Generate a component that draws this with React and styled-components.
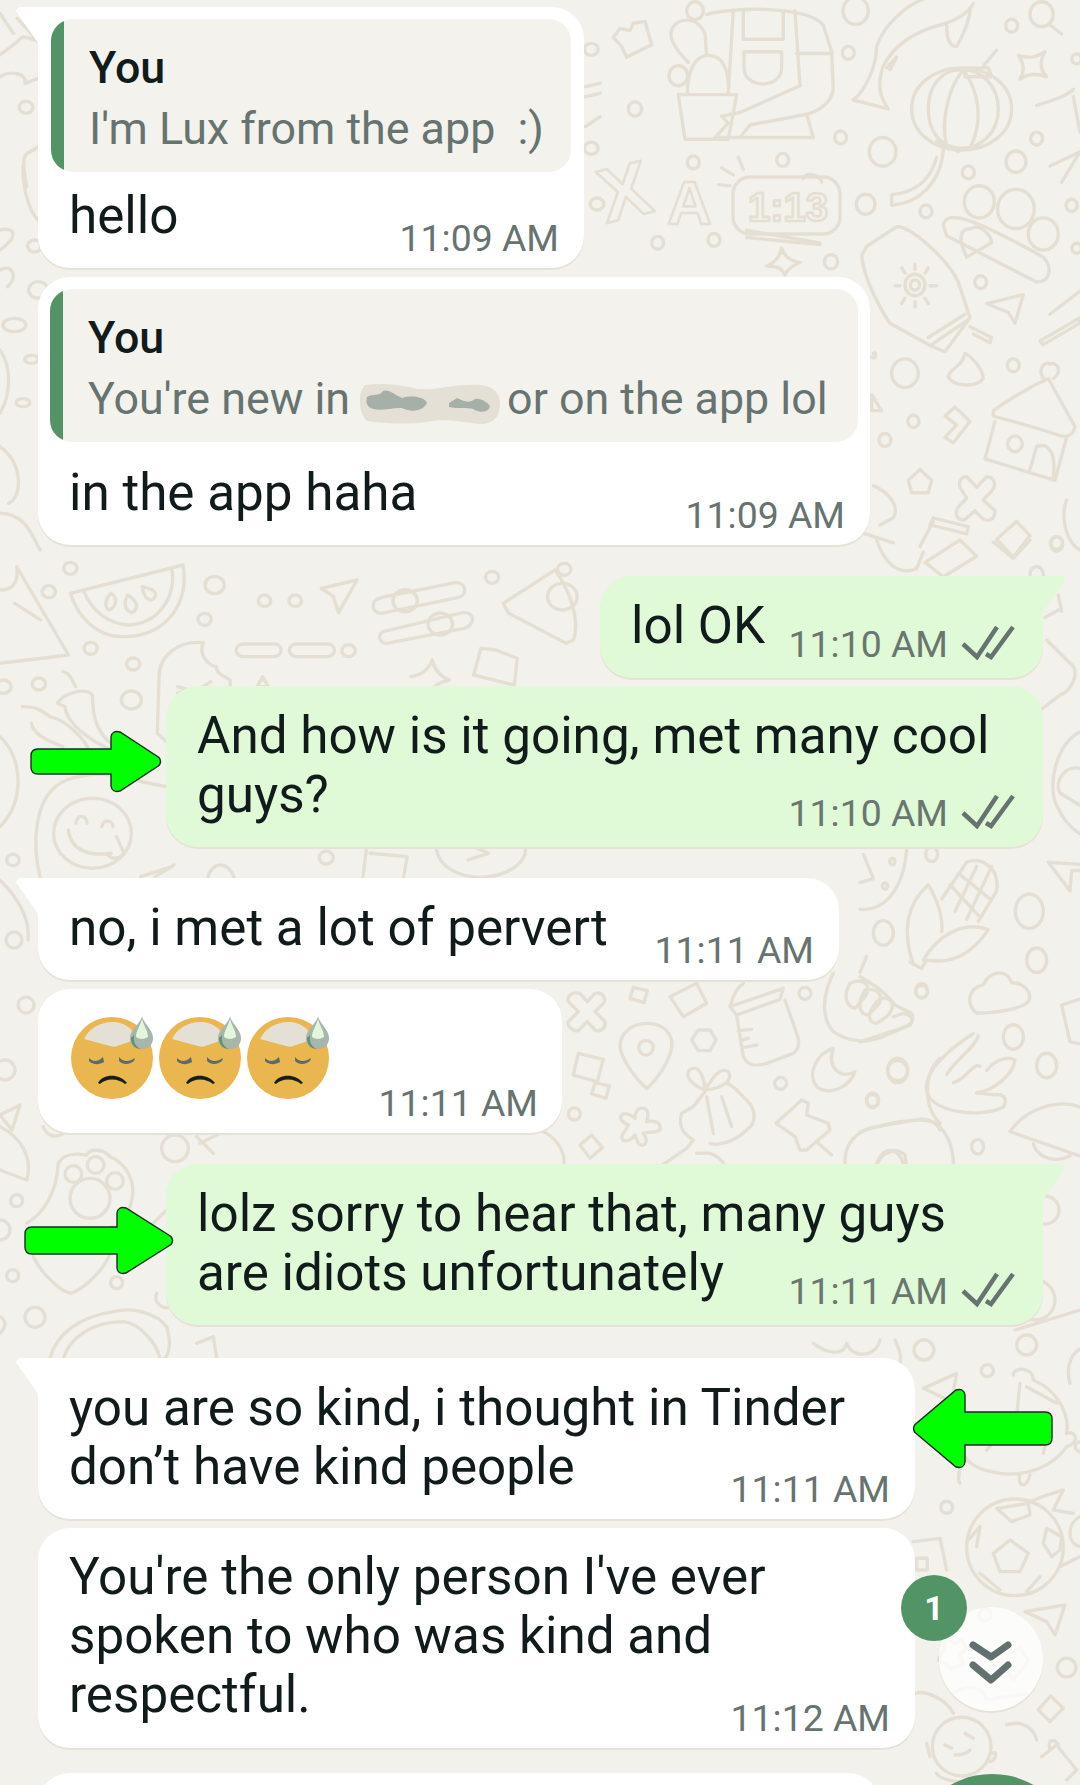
import React from 'react'
import styled, { createGlobalStyle } from 'styled-components'

const GlobalStyle = createGlobalStyle`
  html, body {
    margin: 0;
    padding: 0;
    background: #f3f1ec;
    font-family: Roboto, "Liberation Sans", sans-serif;
  }
`

const Screen = styled.div`
  position: relative;
  width: 1080px;
  height: 1785px;
  overflow: hidden;
  background: #f3f1ec;
`

const Wallpaper = styled.svg`
  position: absolute;
  left: 0;
  top: 0;
  fill: none;
  stroke: #e5dfd3;
  stroke-width: 3.4;
  stroke-linejoin: round;
  stroke-linecap: round;
  * {
    vector-effect: non-scaling-stroke;
  }
  text {
    font-family: "Liberation Sans", sans-serif;
    font-weight: 700;
    stroke-width: 2.6;
  }
`

const Chat = styled.div`
  position: relative;
  display: flex;
  flex-direction: column;
  padding: 7px 37px 0 38px;
`

const Bubble = styled.div`
  position: relative;
  box-sizing: border-box;
  width: ${(p) => p.$w}px;
  margin-top: ${(p) => p.$gap || 0}px;
  align-self: ${(p) => (p.$out ? 'flex-end' : 'flex-start')};
  flex-shrink: 0;
  padding: ${(p) => p.$pad || '20px 32px 23px 31px'};
  background: ${(p) => (p.$out ? '#e0f9d6' : '#ffffff')};
  border-radius: 32px;
  border-top-left-radius: ${(p) => (p.$tail && !p.$out ? '0' : '32px')};
  border-top-right-radius: ${(p) => (p.$tail && p.$out ? '0' : '32px')};
  box-shadow: 0 2px 0 #e7e2d8;

  ${(p) =>
    p.$tail &&
    `&::before {
      content: '';
      position: absolute;
      top: 0;
      ${p.$out ? 'right: -22px;' : 'left: -22px;'}
      width: 24px;
      height: 36px;
      background: ${p.$out ? '#e0f9d6' : '#ffffff'};
      border-top-${p.$out ? 'right' : 'left'}-radius: 5px;
      clip-path: polygon(${p.$out ? '0 0, 100% 0, 100% 12%, 8% 100%, 0 100%' : '0 0, 100% 0, 100% 100%, 92% 100%, 0 12%'});
    }`}
`

const Quote = styled.div`
  display: flex;
  height: 153px;
  background: #f3f2ed;
  border-radius: 22px;
  overflow: hidden;
`

const QuoteBar = styled.div`
  width: 13px;
  flex-shrink: 0;
  background: #539467;
`

const QuoteContent = styled.div`
  padding: 18px 0 0 25px;
  font-size: 44.8px;
  line-height: 61px;
  white-space: pre;
`

const QuoteAuthor = styled.div`
  font-weight: 500;
  color: #111b1b;
`

const QuoteText = styled.div`
  color: #667370;
`

const Smudge = styled.svg`
  display: inline-block;
  width: 143px;
  height: 42px;
  margin: 0 7px 0 7px;
  vertical-align: -11px;
`

const Body = styled.div`
  display: grid;
  padding: ${(p) => p.$pad || '0'};
  > * {
    grid-area: 1 / 1;
  }
`

const Message = styled.div`
  font-size: 51.2px;
  line-height: 59px;
  color: #111b1b;
  white-space: pre;
`

const Stamp = styled.div`
  display: flex;
  align-items: flex-start;
  gap: 12px;
  justify-self: end;
  align-self: end;
  height: 37px;
  margin-right: ${(p) => p.$right ?? -7}px;
  margin-bottom: ${(p) => p.$drop ?? -12}px;
  font-size: 37.4px;
  line-height: 37px;
  color: ${(p) => (p.$out ? '#6a7670' : '#667370')};
`

const Ticks = styled.svg`
  width: 56px;
  height: 36px;
  margin-top: -2px;
  fill: none;
  stroke: #667370;
  stroke-width: 4.5;
`

const EmojiRow = styled.div`
  display: flex;
  gap: 6px;
`

const EmojiFace = styled.svg`
  width: 82px;
  height: 82px;
  display: block;
  overflow: visible;
`

const ArrowIcon = styled.svg`
  position: absolute;
  left: ${(p) => p.$x}px;
  top: ${(p) => p.$y}px;
  transform: ${(p) => (p.$flip ? 'scaleX(-1)' : 'none')};
  overflow: visible;
`

const ScrollButton = styled.div`
  position: absolute;
  left: 939px;
  top: 1607px;
  width: 104px;
  height: 104px;
  border-radius: 50%;
  background: rgba(255, 255, 255, 0.76);
  box-shadow: 0 2px 0 #e7e2d8;
`

const Chevrons = styled.svg`
  display: block;
  fill: none;
  stroke: #627070;
  stroke-width: 7;
  stroke-linecap: round;
  stroke-linejoin: round;
`

const Badge = styled.div`
  position: absolute;
  left: 901px;
  top: 1575px;
  width: 66px;
  height: 66px;
  display: flex;
  align-items: center;
  justify-content: center;
  border-radius: 50%;
  background: #539467;
  color: #ffffff;
  font-size: 34px;
  font-weight: 700;
`

const Fab = styled.div`
  position: absolute;
  left: 908px;
  top: 1774px;
  width: 168px;
  height: 168px;
  border-radius: 50%;
  background: #539467;
`

// wallpaper doodles, noted in the coordinates of the crop they were read from
const doodles = [
  {
    t: 'translate(600 0) scale(.3333 .3571)',
    c: [[105, 305, 20], [745, 148, 18], [722, 385, 18], [848, 425, 40], [1235, 72, 18], [1310, 388, 18], [1248, 453, 30], [1105, 483, 18], [797, 572, 28], [978, 592, 18], [1415, 575, 17], [548, 448, 18], [280, 455, 18], [173, 680, 18], [342, 672, 18], [693, 733, 20], [1142, 790, 18], [915, 1045, 40], [1240, 1023, 18], [940, 1180, 17], [855, 1232, 18], [1370, 1520, 18], [767, 30, 38], [285, 30, 25], [235, 212, 28], [1138, 565, 45], [1248, 585, 55], [1330, 655, 45], [945, 798, 30], [945, 798, 14], [1245, 1243, 22], [1325, 40, 35], [1430, 165, 14], [1430, 695, 14]],
    p: [
      'M40 105 L60 80 L90 85 L100 65 L135 60 L155 125 L80 160 L65 130 Z',
      'M235 265 H410 L385 390 H255 Z',
      'M262 265 C262 190 290 155 325 155 C365 155 390 190 385 265',
      'M265 175 C230 140 205 110 215 85 C225 50 290 40 315 95 L320 155',
      'M320 40 C400 20 620 15 670 70 L695 145 L700 250 C695 285 660 310 620 320 L450 350 L420 385',
      'M600 240 L420 315 L365 325 L385 345 L345 385 H640 L620 320',
      'M400 30 L385 260 M585 30 L600 240 M430 30 V110 H550 V30 M590 150 H690',
      'M432 145 H545 V190 C545 250 432 250 432 190 Z',
      'M760 280 C800 250 830 180 830 130 C850 70 930 0 1000 -10 M860 190 L890 160 L870 195',
      'M760 280 L865 305 C840 270 830 240 850 185 C880 130 940 90 1020 70 C1060 60 1100 45 1120 10',
      'M1040 70 C1040 110 1050 130 1070 130 C1090 100 1110 50 1110 30',
      'M1085 190 C1170 190 1235 240 1235 305 C1235 370 1170 420 1085 420 C1000 420 935 370 935 305 C935 240 1000 190 1085 190 Z',
      'M1085 195 C1150 195 1195 245 1195 305 C1195 365 1150 415 1085 415 C1020 415 985 365 985 305 C985 245 1020 195 1085 195 Z',
      'M1090 195 C1050 240 1020 330 1040 410 M1090 195 C1140 260 1150 340 1110 415',
      'M1095 190 H1165 L1175 215 H1095 Z M1150 185 L1190 140',
      'M1010 395 L1075 425 M1010 440 C990 510 940 540 875 545 L875 575 C950 570 1020 520 1030 420',
      'M1255 155 C1290 165 1310 160 1335 145 C1320 170 1320 195 1340 215 C1310 205 1285 205 1260 222 C1275 200 1270 175 1255 155 Z',
      'M1350 70 L1385 95',
      'M1310 295 C1360 280 1400 270 1420 250 M1420 270 L1440 370 M1350 465 L1440 425 L1385 510',
      'M415 440 L430 475 M365 470 L400 490 M355 517 L390 520',
      'M440 645 L660 680 M440 665 L660 685 M610 500 C620 480 660 490 665 510',
      'M545 695 C555 720 570 730 600 735 C575 745 560 755 555 770 C545 750 530 745 500 745 C525 735 540 720 545 695 Z',
      'M800 690 L890 635 C925 630 1040 720 1075 790 L1110 890 L1035 985 L985 965 L870 905 C830 850 790 770 785 715 Z',
      'M985 945 L1095 880 M995 965 L1105 895 M1110 915 L1175 945 L1170 960 L1120 935',
      'M945 740 V755 M945 845 V860 M885 800 H900 M990 800 H1010 M905 750 L915 765 M985 750 L975 765 M905 850 L915 835 M985 850 L975 835',
      'M1115 640 C1140 625 1175 660 1175 680 L1100 720 C1080 680 1070 640 1115 640 Z',
      'M1030 630 C1040 590 1100 600 1330 720 C1360 750 1350 790 1310 790 L1040 660 Z',
      'M1160 850 L1270 825 L1245 905 L1225 875 Z',
      'M1095 990 C1120 1000 1150 1040 1150 1060 C1130 1085 1060 1085 1045 1055 C1050 1030 1085 1030 1095 990 Z',
      'M1180 1165 L1180 1150 C1240 1110 1310 1075 1345 1060 L1425 1195 C1420 1220 1400 1225 1380 1220 C1320 1200 1240 1180 1180 1165 Z',
      'M1185 1180 L1155 1285 L1365 1345 L1400 1225 M1290 1315 L1310 1250 C1340 1240 1370 1260 1360 1335 M1330 1060 C1310 1030 1340 1010 1350 1020 C1370 1010 1390 1040 1360 1060',
      'M925 1345 L960 1315 L995 1345 L985 1380 H935 Z',
      'M1100 1335 L1130 1365 L1160 1335 C1185 1335 1190 1360 1175 1375 L1150 1400 L1185 1430 C1185 1455 1165 1465 1145 1450 L1125 1430 L1095 1455 C1075 1460 1060 1440 1075 1420 L1100 1395 L1080 1365 C1075 1345 1085 1335 1100 1335 Z',
      'M1035 1165 L1065 1140 L1110 1180 L1060 1240 L1035 1225 L1070 1190 Z',
      'M1350 880 L1440 815 M1320 955 L1440 890 L1440 905 L1330 965 Z',
      'M1400 1400 C1380 1450 1400 1520 1440 1540',
      'M820 990 C830 980 830 1010 815 1000 M815 1105 L845 1150 L815 1150 Z',
      'M780 1490 L880 1520 M1000 1450 L1105 1475 L1100 1495 L990 1470 Z M960 1530 L1000 1460 M1190 1510 L1250 1460 L1290 1500 L1240 1560 Z',
      'M820 1360 C870 1380 900 1420 880 1450 L840 1470'
    ]
  },
  {
    t: 'translate(0 560) scale(.37 .3333)',
    c: [[190, 25, 18], [132, 95, 18], [580, 75, 26], [715, 122, 17], [798, 122, 17], [553, 178, 18], [245, 265, 18], [360, 312, 18], [942, 272, 18], [1330, 52, 18], [105, 372, 18], [355, 420, 27], [10, 380, 20], [1095, 122, 33], [1190, 192, 33], [1520, 110, 40], [1525, 28, 18], [250, 820, 105], [35, 900, 17], [882, 893, 19]],
    p: [
      'M190 100 L495 15 C510 120 460 230 330 230 C260 230 210 170 190 100 Z',
      'M225 90 C250 160 300 195 350 195 C430 190 475 110 465 30',
      'M300 100 C285 115 280 140 295 150 C315 140 320 115 300 100 Z M345 105 C335 125 335 150 355 158 C375 150 375 125 345 105 Z M385 80 C385 100 395 120 410 120 C425 110 430 90 385 80 Z',
      'M868 85 L965 60 L915 158 L900 108 Z',
      'M1010 130 C1010 115 1040 110 1065 105 L1230 68 C1260 65 1265 105 1240 112 L1040 158 C1015 165 1005 145 1010 130 Z',
      'M1035 215 L1250 158 C1285 155 1285 195 1255 205 L1045 250 C1025 250 1020 225 1035 215 Z',
      'M657 252 H741 A19 19 0 0 1 741 290 H657 A19 19 0 0 1 657 252 Z M801 252 H885 A19 19 0 0 1 885 290 H801 A19 19 0 0 1 801 252 Z',
      'M1360 130 L1500 30 C1540 90 1568 180 1550 240 L1530 250 L1375 160 Z',
      'M550 248 C480 240 430 290 430 350 L425 520 L450 545 M550 248 C535 280 560 315 585 320 C585 345 610 350 622 360 L622 380',
      'M1300 265 L1340 270 L1398 295 L1390 375 L1280 345 Z',
      'M1168 300 C1175 330 1190 350 1215 360 C1190 365 1180 375 1170 385 M1110 350 C1140 345 1160 325 1168 300',
      'M0 90 C40 90 50 60 45 20 L185 285 L0 310 M40 130 L110 180',
      'M155 430 C170 400 230 380 250 405 C250 470 260 520 310 560 L300 570 C240 540 180 490 175 440 Z M170 335 C195 340 195 370 205 380',
      'M60 440 C100 440 110 450 135 470 C180 480 230 540 240 570 M85 490 C90 520 120 540 170 560',
      'M205 790 C210 760 235 765 235 790 M275 800 C280 775 305 780 305 800 M185 810 C190 870 240 890 300 880 M290 880 C300 900 320 900 335 880 L315 830',
      'M110 960 C85 850 90 700 180 660 C280 620 340 660 450 680',
      'M0 530 C60 590 70 720 0 800',
      'M380 950 L465 920 M420 950 L470 915 M560 960 C570 900 620 900 635 960 M990 870 L980 960 M1000 880 L1100 890 L1090 960 M1180 870 C1190 930 1260 960 1320 950 C1390 940 1420 900 1420 870 M1265 900 L1320 880 L1280 860',
      'M480 380 L510 390 L480 400 M550 380 L570 365 M710 350 L725 380 H695 Z'
    ]
  },
  {
    t: 'translate(540 960)  scale(.3333)',
    c: [[795, 100, 18], [1145, 95, 18], [722, 370, 18], [103, 462, 18], [1073, 332, 30], [997, 422, 18], [318, 263, 22]],
    p: [
      'M120 100 L142 125 L165 100 C190 95 200 120 190 130 L165 155 L195 185 C200 210 175 215 165 210 L142 185 L115 212 C90 215 80 190 85 185 L115 155 L85 125 C80 105 100 95 120 100 Z',
      'M280 82 L322 92 L312 128 L270 115 Z M390 110 L470 70 L500 130 L430 170 Z',
      'M320 190 C380 190 400 230 395 265 C385 310 350 360 320 385 C290 360 245 300 240 260 C240 220 275 190 320 190 Z',
      'M475 210 H510 L528 240 L510 272 H475 L455 240 Z',
      'M570 140 L730 85 L720 118 L590 165 Z M590 165 L610 290 C625 320 650 320 680 310 L760 280 C780 265 780 245 770 220 L735 120 M610 70 C595 80 580 100 570 140 M595 212 L635 208 M605 240 L625 235 M612 262 L650 255',
      'M880 40 C850 100 840 170 880 215 C930 250 990 250 1040 225 L1110 195 C1125 180 1115 165 1090 160 L1060 170',
      'M930 70 C970 50 1000 80 975 110 L945 145 C925 140 905 115 930 70 Z M975 90 C1010 80 1040 110 1010 140 L985 165 C965 165 945 140 975 90 Z M1020 115 C1060 110 1070 140 1040 170 L1010 190 C990 190 970 165 1020 115 Z',
      'M115 280 L190 298 L172 365 L100 345 Z M165 368 L208 378 L198 415 L155 402 Z',
      'M880 265 C830 280 800 340 830 380 C870 410 930 380 945 335 C900 360 860 320 880 265 Z',
      'M785 420 L805 430 L800 465 L865 490 L870 510 L800 570 L780 570 L765 530 L730 505 L708 490 Z M830 545 L875 585',
      'M300 445 C330 440 325 470 320 485 C350 480 365 490 360 510 C340 520 320 515 310 520 C330 550 310 565 295 550 L285 525 C270 545 245 550 245 530 C250 515 265 500 265 495 C250 490 235 475 245 465 C260 455 280 470 285 475 C285 460 290 450 300 445 Z',
      'M495 390 C440 370 430 330 460 325 C480 320 495 360 495 390 C520 350 540 320 565 335 C580 360 550 385 495 390 Z',
      'M495 395 L460 440 L425 460 C415 490 425 520 460 540 L440 565 L360 620 M560 370 C590 380 605 410 620 420 C650 450 650 490 620 510 C590 540 540 560 510 550 M545 410 L575 500 M500 410 L520 520 M470 580 H510 C540 590 550 605 555 620',
      'M155 525 L187 563 L150 595 L120 555 Z',
      'M915 620 C910 550 950 510 1010 500 L1140 478 C1170 475 1195 495 1200 510 M1010 620 C1020 575 1070 560 1095 585 L1100 620',
      'M0 510 C50 530 80 580 70 620 M1200 295 C1150 340 1150 440 1200 490'
    ]
  },
  {
    t: 'translate(860 540) scale(.3333 .408)',
    c: [[70, 963, 30], [508, 910, 42], [530, 1030, 30], [185, 1105, 18], [460, 1218, 30], [113, 1300, 30], [560, 1288, 30], [38, 1373, 18], [353, 1487, 18], [215, 770, 18], [590, 10, 18], [530, 85, 20], [75, 848, 8], [97, 788, 8]],
    p: [
      'M160 1040 C130 970 130 900 205 845 C230 880 250 920 245 960 M150 1035 L185 1050 L200 1030',
      'M205 1030 C280 1040 340 1010 385 955 C320 935 240 960 190 1030',
      'M245 880 L320 790 C360 775 420 800 410 860 L355 935 M270 845 L355 920 M300 820 L390 880 M285 910 L350 800 M320 930 L395 800',
      'M565 790 L660 795 M565 790 L630 860 L635 810 L660 810',
      'M350 1160 C320 1140 320 1100 370 1090 C390 1055 440 1050 455 1085 C490 1085 520 1110 505 1130 C490 1150 400 1160 350 1160 Z',
      'M340 1210 C280 1240 190 1300 200 1350 C210 1400 350 1420 430 1390 C445 1370 430 1355 400 1360 L350 1355',
      'M260 1310 C300 1260 340 1250 355 1215 M280 1330 C320 1320 340 1280 360 1290 M380 1300 C410 1270 450 1265 465 1275 C460 1310 400 1350 350 1355',
      'M0 1070 C40 1090 80 1110 105 1140 L155 1160 C165 1180 150 1190 130 1195 L0 1230 M20 1020 L0 1060',
      'M450 1450 C500 1390 600 1370 660 1390 M450 1450 L660 1510 M520 1480 C530 1510 580 1530 630 1510',
      'M605 1140 L660 1125 M605 1140 L630 1230 L660 1235',
      'M0 1450 C80 1430 180 1410 230 1430 C270 1460 280 1500 280 1530 M50 1530 C70 1480 120 1490 130 1530',
      'M660 470 C590 500 560 600 590 650 C610 690 640 710 660 720 M660 560 C620 550 580 590 600 620 L660 650',
      'M50 0 C70 50 110 90 170 70 L190 30 M195 55 L300 0 L350 40 L250 90 Z M400 5 L460 45 L510 0',
      'M600 170 L555 190 M595 135 L605 175 M560 245 L640 310 C655 330 635 370 600 380 L520 430',
      'M140 760 C130 850 80 910 0 905 M10 770 L40 830 L0 840'
    ]
  },
  {
    t: 'translate(780 1340) scale(.3333)',
    c: [[432, 30, 30], [740, 15, 30], [622, 92, 18], [500, 502, 18], [860, 983, 28], [615, 825, 18], [705, 622, 145], [545, 1220, 88], [900, 320, 14]],
    p: [
      'M430 145 L530 100 L515 185 Z',
      'M700 105 C700 80 760 80 760 120 C830 150 870 220 860 280 C890 270 900 310 860 320 C820 380 740 410 660 400 C590 390 560 370 550 340 C540 380 530 420 540 430',
      'M720 130 L710 230 L620 330 M710 230 L810 260 L790 340 M720 400 C710 440 740 450 750 405 M740 140 L830 190',
      'M690 600 L745 640 L720 695 L660 695 L640 640 Z',
      'M650 505 L745 490 L750 525 L695 545 Z M800 565 L845 590 L840 630 L815 650 L790 610 Z M565 600 L600 560 L590 620 M600 700 L660 750 M780 710 L740 755',
      'M740 490 C780 470 820 460 850 450 L820 510 L880 520 M900 530 C860 550 860 610 900 620 M840 680 L900 650',
      'M400 605 L480 595 L500 690 M410 655 H442 V690 H410 Z',
      'M735 815 L855 795 L825 885 L800 845 Z',
      'M775 1110 L812 1068 L850 1105 L810 1145 Z',
      'M495 1215 L515 1225 M555 1180 L580 1195 M525 1245 C545 1245 560 1240 570 1230 M450 1250 L440 1210 M640 1240 C650 1230 650 1260 630 1265 M470 1300 C480 1330 600 1330 650 1335',
      'M405 1060 C440 1050 500 1080 520 1120 M680 1155 C720 1140 760 1160 770 1200',
      'M785 1250 L830 1215 L890 1290 L860 1320 M810 1225 C800 1205 820 1190 835 1215',
      'M870 130 C850 60 900 20 900 30 M345 0 C360 30 370 60 355 80 M100 10 C140 40 190 50 200 10 M200 10 C220 60 290 50 300 0',
      'M500 895 L525 910 L545 900 L560 925 L540 945 L550 975 L515 985 L475 960 L490 930 Z',
      'M690 940 L720 925 L745 960 L725 990 L700 1020 L680 990 Z',
      'M520 1060 C560 1030 610 1040 620 1080 C660 1070 700 1070 740 1060'
    ]
  },
  {
    t: 'translate(0 1120) scale(.3333)',
    c: [[270, 235, 60], [220, 162, 25], [287, 135, 25], [345, 183, 25], [50, 242, 18], [0, 330, 30], [38, 467, 18], [350, 488, 18], [105, 592, 30], [525, 85, 40]],
    p: [
      'M175 130 C190 100 230 100 260 105 C270 85 310 85 330 110 C380 130 410 190 395 240 C385 290 360 330 335 320',
      'M80 310 C130 280 170 220 175 130 M100 410 C130 470 190 520 215 520 C260 500 310 450 330 403',
      'M0 20 C60 50 100 110 80 180 L0 150',
      'M150 715 C170 640 240 590 340 575 C400 560 470 580 500 620 C515 670 510 700 490 720 M190 715 C210 650 280 605 370 605 C420 610 470 670 480 715',
      'M590 50 L640 100 M660 40 L600 70 M130 20 C140 50 170 55 190 40 M470 520 C460 550 490 570 510 560',
      'M0 590 C20 600 20 620 0 640 M590 670 L640 650 L650 715 M450 320 L500 270'
    ]
  },
  {
    t: 'scale(.3827 .3333)',
    c: [[68, 322, 18], [90, 738, 18], [100, 870, 25], [1545, 148, 18], [1545, 445, 18], [1560, 612, 18]],
    p: [
      'M0 40 L35 100 M45 55 L100 125 M0 165 L40 130 L60 110 L95 120',
      'M0 230 C30 210 70 220 65 250 L100 235',
      'M70 560 C50 440 70 470 100 440 M60 500 C60 580 80 640 100 660',
      'M0 690 C40 680 50 710 0 750 M0 810 C30 790 50 830 20 860 M1530 260 L1568 250 M1530 290 L1568 280 M1530 380 L1568 350'
    ]
  },
  {
    t: 'translate(0 280) scale(.574 .3333)',
    c: [[25, 135, 20], [55, 238, 12], [40, 368, 12]],
    p: ['M0 210 C20 260 20 340 0 400 M0 500 C40 550 40 650 15 670 M0 700 C50 700 60 790 70 810']
  },
  {
    t: 'translate(0 880)',
    c: [[14, 60, 8], [26, 125, 8], [5, 190, 10]],
    p: ['M0 0 C20 20 30 40 28 60 M0 235 L20 225 L12 250 Z']
  },
  {
    t: 'translate(925 1180)',
    c: [[120, 30, 14], [60, 80, 8], [110, 120, 20]],
    p: ['M40 0 L70 30 L30 60 M90 150 L155 130 M0 110 L40 100 L60 140']
  }
]

const Doodles = () => (
  <Wallpaper width='1080' height='1785' viewBox='0 0 1080 1785'>
    {doodles.map((group, i) => (
      <g key={i} transform={group.t}>
        {group.c.map(([cx, cy, r], j) => (
          <circle key={j} cx={cx} cy={cy} r={r} />
        ))}
        {group.p.map((d, j) => (
          <path key={j} d={d} />
        ))}
      </g>
    ))}
    <rect x='733' y='177' width='107' height='57' rx='17' />
    <text x='748' y='221' fontSize='40'>1:13</text>
    <text x='667' y='224' fontSize='62'>A</text>
    <text x='600' y='218' fontSize='76' transform='rotate(-14 625 195)'>X</text>
  </Wallpaper>
)

const SeenTicks = () => (
  <Ticks viewBox='0 0 56 36'>
    <path d='M3 20 L17 33 L37 3' />
    <path d='M26 30 L31 33 L53 3' />
  </Ticks>
)

const Time = ({ children, out, drop, right }) => (
  <Stamp $out={out} $drop={drop} $right={right}>
    {children}
    {out && <SeenTicks />}
  </Stamp>
)

const SweatFace = () => (
  <EmojiFace viewBox='0 0 82 82'>
    <circle cx='41' cy='41' r='41' fill='#e9b64f' />
    <path d='M13 22 C18 11 30 4 44 5 C52 6 58 9 63 16 L61 24 L43 30 Z' fill='#e5e0d6' />
    <path d='M18 41 C22 45 27 45 32 40 L33 45 C28 48 22 48 18 44 Z M48 40 C52 45 58 45 64 41 L63 44 C58 48 52 48 48 44 Z' fill='#5c6a6c' />
    <path d='M27 66 C32 57 48 56 56 66 L54 67 C47 61 35 61 29 67 Z' fill='#14201f' />
    <path d='M71 0 C74 8 82 13 82 21 C82 28 77 32 71 32 C64 32 59 28 59 21 C59 13 68 8 71 0 Z' fill='#a7b5ac' />
    <path d='M60 21 C60 28 64 32 70 32 C65 30 62 26 63 18 Z' fill='#5f9470' />
    <path d='M71 2 C73 9 77 14 77 20 C72 23 68 22 65 20 C65 14 69 9 71 2 Z' fill='#e3f7dc' />
  </EmojiFace>
)

const BlurredName = () => (
  <Smudge viewBox='0 0 143 42'>
    <path d='M8 2 C30 -1 50 3 60 6 C80 8 95 0 125 2 C138 4 143 12 143 20 C143 30 140 40 125 41 C100 39 90 35 70 39 C50 42 20 40 10 38 C2 32 0 10 8 2 Z' fill='#e5e0d5' />
    <path d='M10 14 C16 10 22 14 26 8 C32 6 38 12 45 15 C55 12 68 14 70 20 C66 28 55 30 45 25 C35 24 20 30 12 24 C9 21 9 17 10 14 Z' fill='#a6b0a8' />
    <path d='M92 20 L100 15 C106 18 112 21 118 16 C124 15 132 20 133 24 C130 30 122 30 116 26 C110 24 100 26 92 24 Z' fill='#a6b0a8' />
  </Smudge>
)

const arrowPath = (w, h, neck) => {
  const a = Math.round(h * 0.3)
  const b = Math.round(h * 0.7)
  return `M7 ${a} H${neck} V7 Q${neck + 1} 0 ${neck + 9} 2 L${w - 2} ${h / 2 - 4} Q${w + 1} ${h / 2} ${w - 2} ${h / 2 + 4} L${neck + 9} ${h - 2} Q${neck + 1} ${h} ${neck} ${h - 7} V${b} H7 Q0 ${b} 0 ${b - 7} V${a + 7} Q0 ${a} 7 ${a} Z`
}

const Arrow = ({ x, y, w, h, neck, flip }) => (
  <ArrowIcon $x={x} $y={y} $flip={flip} width={w} height={h} viewBox={`0 0 ${w} ${h}`}>
    <path d={arrowPath(w, h, neck)} fill='#00ff00' stroke='#1c2a22' strokeWidth='1.4' />
  </ArrowIcon>
)

const App = () => (
  <Screen>
    <GlobalStyle />
    <Doodles />
    <Chat>
      <Bubble $w={546} $tail $pad='12px 13px 23px'>
        <Quote>
          <QuoteBar />
          <QuoteContent>
            <QuoteAuthor>You</QuoteAuthor>
            <QuoteText>I'm Lux from the app  :)</QuoteText>
          </QuoteContent>
        </Quote>
        <Body $pad='14px 19px 0 18px'>
          <Message>hello</Message>
          <Time>11:09 AM</Time>
        </Body>
      </Bubble>

      <Bubble $w={832} $gap={9} $pad='12px 12px 23px'>
        <Quote>
          <QuoteBar />
          <QuoteContent>
            <QuoteAuthor>You</QuoteAuthor>
            <QuoteText>
              You're new in
              <BlurredName />
              or on the app lol
            </QuoteText>
          </QuoteContent>
        </Quote>
        <Body $pad='21px 20px 0 19px'>
          <Message>in the app haha</Message>
          <Time>11:09 AM</Time>
        </Body>
      </Bubble>

      <Bubble $w={443} $gap={31} $out $tail>
        <Body>
          <Message>lol OK</Message>
          <Time out drop={-8} right={-5}>11:10 AM</Time>
        </Body>
      </Bubble>

      <Bubble $w={877} $gap={8} $out>
        <Body>
          <Message>{'And how is it going, met many cool\nguys?'}</Message>
          <Time out drop={-8} right={-5}>11:10 AM</Time>
        </Body>
      </Bubble>

      <Bubble $w={801} $gap={31} $tail>
        <Body>
          <Message>no, i met a lot of pervert</Message>
          <Time>11:11 AM</Time>
        </Body>
      </Bubble>

      <Bubble $w={524} $gap={9} $pad='28px 32px 34px 33px'>
        <Body>
          <EmojiRow>
            <SweatFace />
            <SweatFace />
            <SweatFace />
          </EmojiRow>
          <Time drop={-23} right={-8}>11:11 AM</Time>
        </Body>
      </Bubble>

      <Bubble $w={877} $gap={31} $out $tail>
        <Body>
          <Message>{'lolz sorry to hear that, many guys\nare idiots unfortunately'}</Message>
          <Time out drop={-8} right={-5}>11:11 AM</Time>
        </Body>
      </Bubble>

      <Bubble $w={877} $gap={33} $tail>
        <Body>
          <Message>{'you are so kind, i thought in Tinder\ndon’t have kind people'}</Message>
          <Time>11:11 AM</Time>
        </Body>
      </Bubble>

      <Bubble $w={877} $gap={9} $pad='19px 32px 24px 31px'>
        <Body>
          <Message>{"You're the only person I've ever\nspoken to who was kind and\nrespectful."}</Message>
          <Time drop={-13}>11:12 AM</Time>
        </Body>
      </Bubble>

      <Bubble $w={842} $gap={25}>
        <Body>
          <Message> </Message>
        </Body>
      </Bubble>
    </Chat>

    <Arrow x={31} y={730} w={130} h={63} neck={80} />
    <Arrow x={25} y={1206} w={148} h={69} neck={92} />
    <Arrow x={913} y={1388} w={139} h={81} neck={87} flip />

    <ScrollButton>
      <Chevrons width='104' height='104' viewBox='0 0 104 104'>
        <path d='M34 38 L52 50 L69 38' />
        <path d='M34 58 L52 73 L69 58' />
      </Chevrons>
    </ScrollButton>
    <Badge>1</Badge>
    <Fab />
  </Screen>
)

export default App
